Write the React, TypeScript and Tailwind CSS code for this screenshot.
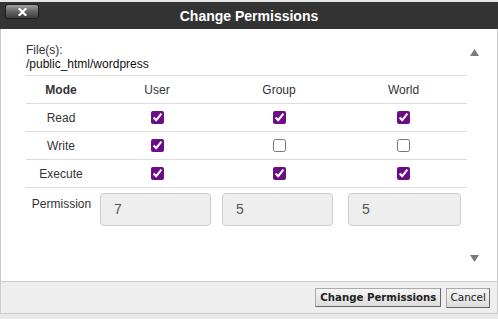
import React from "react";

const rows = [
  { label: "Read", values: [true, true, true] },
  { label: "Write", values: [true, false, false] },
  { label: "Execute", values: [true, true, true] },
];

const Check = ({ on }: { on: boolean }) => (
  <input
    type="checkbox"
    checked={on}
    readOnly
    className="m-0 w-[13px] h-[13px] accent-[#6a0d87]"
  />
);

export default function App() {
  return (
    <div className="w-[498px] h-[319px] bg-[#e8e8e8] font-['Liberation_Sans',Arial,sans-serif] text-[12px] text-[#333] overflow-hidden">
      <div className="h-[2px] bg-[#e6e6e6]" />

      {/* Title bar */}
      <div className="h-[27px] bg-[#333333] grid grid-cols-[1fr_auto_1fr]">
        <div className="pt-[2px] pl-[5px]">
          <button
            type="button"
            className="w-[34px] h-[15px] rounded-[3px] border border-[#1e1e1e] bg-gradient-to-b from-[#a0a0a0] via-[#666] to-[#3c3c3c] flex items-center justify-center"
          >
            <svg width="9" height="8" viewBox="0 0 9 8">
              <path d="M1.5 1 L7.5 7 M7.5 1 L1.5 7" stroke="#fff" strokeWidth="2.2" strokeLinecap="square" />
            </svg>
          </button>
        </div>
        <h1 className="text-white font-bold text-[14px] leading-[27px] pt-[1px]">Change Permissions</h1>
        <div />
      </div>

      {/* Body */}
      <div className="h-[252px] bg-white border-l border-r border-[#c8c8c8] flex">
        <div className="w-[466px] pl-[25px] pt-[14px]">
          <p className="leading-[14px]">File(s):</p>
          <p className="leading-[14px] text-[#111]">/public_html/wordpress</p>

          <div className="mt-[4px] w-[441px] border-t border-[#dddddd]">
            <div className="grid grid-cols-[70px_122px_122px_127px] h-[28px] border-b border-[#dddddd] items-center text-center">
              <span className="font-bold">Mode</span>
              <span>User</span>
              <span>Group</span>
              <span>World</span>
            </div>
            {rows.map((r) => (
              <div
                key={r.label}
                className="grid grid-cols-[70px_122px_122px_127px] h-[28px] border-b border-[#dddddd] items-center text-center"
              >
                <span>{r.label}</span>
                {r.values.map((v, i) => (
                  <span key={i} className="flex justify-center">
                    <Check on={v} />
                  </span>
                ))}
              </div>
            ))}
            <div className="flex pt-[5px]">
              <span className="w-[70px] text-center pt-[2px] pl-[1px]">Permission</span>
              {[
                { v: "7", cls: "ml-[4px] w-[111px]" },
                { v: "5", cls: "ml-[11px] w-[111px]" },
                { v: "5", cls: "ml-[15px] w-[113px]" },
              ].map((f, i) => (
                <div
                  key={i}
                  className={`${f.cls} h-[33px] bg-[#eeeeee] border border-[#cccccc] rounded-[4px] pl-[13px] flex items-center text-[14px] text-[#555]`}
                >
                  {f.v}
                </div>
              ))}
            </div>
          </div>
        </div>

        {/* Scroll arrows */}
        <div className="flex-1 flex flex-col justify-between items-start pl-[3px] pt-[20px] pb-[19px]">
          <svg width="9" height="7" viewBox="0 0 9 7">
            <path d="M4.5 0 L9 7 L0 7 Z" fill="#7a7a7a" />
          </svg>
          <svg width="9" height="7" viewBox="0 0 9 7">
            <path d="M0 0 L9 0 L4.5 7 Z" fill="#7a7a7a" />
          </svg>
        </div>
      </div>

      {/* Footer */}
      <div className="h-[33px] bg-[#eeeeee] border-t border-b border-[#cccccc] border-l border-r flex items-center justify-end gap-[5px] pr-[7px] font-['DejaVu_Sans',Verdana,sans-serif] text-[#222]">
        <button
          type="button"
          className="h-[19px] px-[4px] text-[10.2px] font-bold bg-gradient-to-b from-[#f6f6f6] to-[#dcdcdc] border border-[#aaa] border-r-[#666] border-b-[#666]"
        >
          Change Permissions
        </button>
        <button
          type="button"
          className="h-[20px] px-[3px] text-[10.5px] bg-gradient-to-b from-[#f6f6f6] to-[#dcdcdc] border border-[#aaa] border-r-[#666] border-b-[#666]"
        >
          Cancel
        </button>
      </div>
    </div>
  );
}
